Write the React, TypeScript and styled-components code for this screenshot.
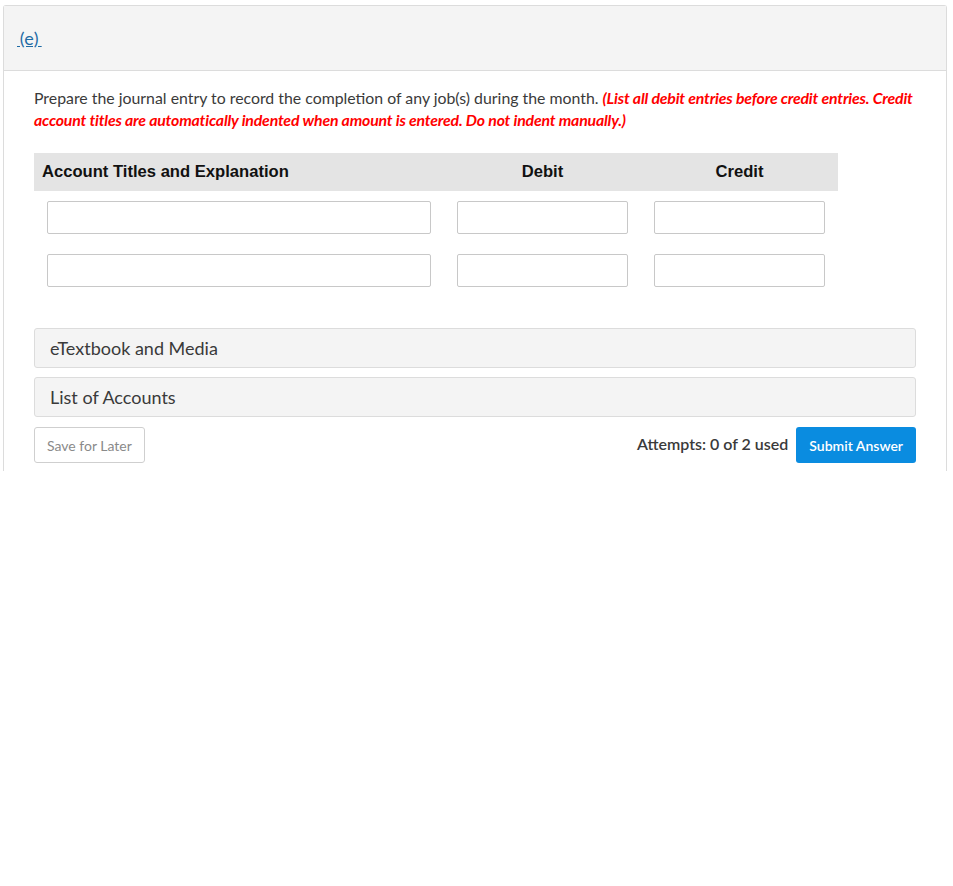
import styled, { createGlobalStyle } from "styled-components";

const GlobalStyle = createGlobalStyle`
  html, body {
    margin: 0;
    background: #fff;
    font-family: Lato, "Open Sans", sans-serif;
    color: #333;
  }
  * {
    box-sizing: border-box;
  }
`;

const Page = styled.div`
  padding: 5px 6px 0 3px;
`;

const Panel = styled.section`
  border: 1px solid #dcdcdc;
  border-bottom: none;
  border-radius: 3px 3px 0 0;
  background: #fff;
`;

const PanelHeader = styled.div`
  height: 65px;
  display: flex;
  align-items: center;
  padding: 0 13px;
  background: #f4f4f4;
  border-bottom: 1px solid #dcdcdc;
`;

const PartLink = styled.a`
  color: #1f6ba5;
  font-size: 18px;
  letter-spacing: 0.4px;
  text-decoration: underline;
  cursor: pointer;
`;

const PanelBody = styled.div`
  padding: 16px 30px 8px 30px;
`;

const Question = styled.p`
  margin: 0;
  font-size: 15.85px;
  line-height: 22px;
  color: #3a3a3a;
`;

const Note = styled.em`
  color: #f00;
  font-weight: 700;
  letter-spacing: -0.18px;
`;

const Table = styled.div`
  margin-top: 22px;
  width: 804px;
  display: grid;
  grid-template-columns: 410px 197px 197px;
`;

const HeadCell = styled.div<{ align?: string }>`
  height: 38px;
  display: flex;
  align-items: center;
  justify-content: ${(p) => (p.align === "center" ? "center" : "flex-start")};
  padding: 0 8px;
  background: #e4e4e4;
  font-family: "Liberation Sans", Arial, sans-serif;
  font-weight: 700;
  font-size: 16.6px;
  color: #111;
`;

const Cell = styled.div`
  padding: 10px 13px;
`;

const Field = styled.input`
  display: block;
  width: 100%;
  height: 33px;
  border: 1px solid #c8c8c8;
  border-radius: 2px;
  background: #fff;
  font-size: 14px;
  padding: 0 8px;
  outline: none;
`;

const Accordions = styled.div`
  margin-top: 31px;
  display: flex;
  flex-direction: column;
  gap: 9px;
`;

const AccordionBar = styled.div`
  height: 40px;
  display: flex;
  align-items: center;
  padding: 0 15px;
  background: #f4f4f4;
  border: 1px solid #dcdcdc;
  border-radius: 3px;
  font-size: 18px;
  color: #3a3a3a;
  cursor: pointer;
`;

const Footer = styled.div`
  margin-top: 10px;
  display: flex;
  align-items: center;
  justify-content: space-between;
`;

const GhostButton = styled.button`
  height: 36px;
  padding: 0 12px;
  border: 1px solid #cfcfcf;
  border-radius: 3px;
  background: #fff;
  color: #8a8a8a;
  font-family: Lato, sans-serif;
  font-size: 14px;
`;

const Actions = styled.div`
  display: flex;
  align-items: center;
  gap: 8px;
`;

const Attempts = styled.span`
  font-size: 16px;
  font-weight: 600;
  color: #3a3a3a;
  margin-top: -3px;
`;

const PrimaryButton = styled.button`
  height: 36px;
  padding: 0 13px;
  border: none;
  border-radius: 3px;
  background: #0a8ce0;
  color: #fff;
  font-family: Lato, sans-serif;
  font-weight: 600;
  font-size: 14px;
`;

const rows = [0, 1];

export default function App() {
  return (
    <>
      <GlobalStyle />
      <Page>
        <Panel>
          <PanelHeader>
            <PartLink>{"\u2009(e)\u2009"}</PartLink>
          </PanelHeader>
          <PanelBody>
            <Question>
              Prepare the journal entry to record the completion of any job(s) during the month.{" "}
              <Note>
                (List all debit entries before credit entries. Credit account titles are automatically
                indented when amount is entered. Do not indent manually.)
              </Note>
            </Question>
            <Table>
              <HeadCell>Account Titles and Explanation</HeadCell>
              <HeadCell align="center">Debit</HeadCell>
              <HeadCell align="center">Credit</HeadCell>
              {rows.map((r) => (
                <>
                  <Cell key={`a${r}`}>
                    <Field type="text" />
                  </Cell>
                  <Cell key={`d${r}`}>
                    <Field type="text" />
                  </Cell>
                  <Cell key={`c${r}`}>
                    <Field type="text" />
                  </Cell>
                </>
              ))}
            </Table>
            <Accordions>
              <AccordionBar>eTextbook and Media</AccordionBar>
              <AccordionBar>List of Accounts</AccordionBar>
            </Accordions>
            <Footer>
              <GhostButton>Save for Later</GhostButton>
              <Actions>
                <Attempts>Attempts: 0 of 2 used</Attempts>
                <PrimaryButton>Submit Answer</PrimaryButton>
              </Actions>
            </Footer>
          </PanelBody>
        </Panel>
      </Page>
    </>
  );
}
